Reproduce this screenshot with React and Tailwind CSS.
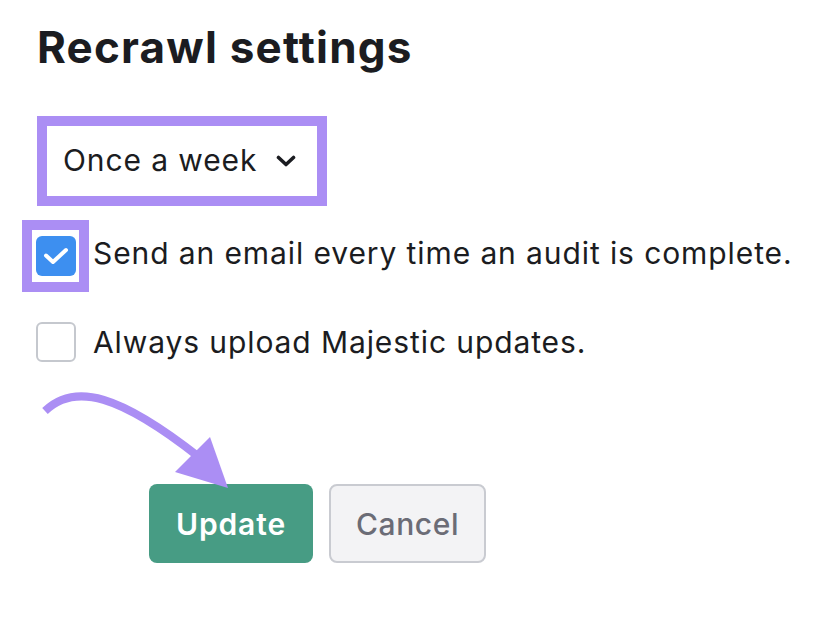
import React from 'react'

function Chevron() {
  return (
    <svg width="20" height="12" viewBox="0 0 20 12" fill="none">
      <path d="M2.5 2.5L10 9.5L17.5 2.5" stroke="#1b1c21" strokeWidth="3.6" strokeLinecap="round" strokeLinejoin="round" />
    </svg>
  )
}

function Arrow() {
  return (
    <svg className="absolute left-0 top-0 pointer-events-none" width="825" height="624" viewBox="0 0 825 624">
      <path d="M45 411 C 75 382, 120 395, 199 457" stroke="#ab8ef4" strokeWidth="8" fill="none" />
      <polygon points="175,472 210,437 228,488" fill="#ab8ef4" />
    </svg>
  )
}

export default function App() {
  return (
    <div className="relative w-[825px] h-[624px] bg-white font-['Inter',sans-serif] text-[#1b1c21] overflow-hidden">
      <h1 className="pl-[37px] pt-[25px] text-[44px] leading-none font-bold tracking-[1.2px]">
        Recrawl settings
      </h1>

      <div className="ml-[37px] mt-[47px] w-[290px] h-[90px] border-[10px] border-[#ab8ef4] flex items-center pl-[16px] pb-[3px] bg-white">
        <span className="text-[30px] leading-none tracking-[0.9px]">Once a week</span>
        <span className="ml-[19px] mt-[3px]">
          <Chevron />
        </span>
      </div>

      <div className="mt-[14px] ml-[22px] flex items-start">
        <div className="w-[67px] h-[72px] border-[10px] border-[#ab8ef4] flex items-center justify-center">
          <div className="w-[40px] h-[40px] rounded-[6px] bg-[#3d8ff0] flex items-center justify-center">
            <svg width="26" height="18" viewBox="0 0 26 18" fill="none">
              <path d="M3 8.5L10 15L23 3" stroke="white" strokeWidth="4" strokeLinecap="round" strokeLinejoin="round" />
            </svg>
          </div>
        </div>
        <span className="ml-[4px] mt-[18px] text-[30px] leading-none tracking-[0.9px]">
          Send an email every time an audit is complete.
        </span>
      </div>

      <div className="mt-[30px] ml-[36px] flex items-start">
        <div className="w-[40px] h-[40px] rounded-[6px] border-2 border-[#c5c8ce] bg-white" />
        <span className="ml-[17px] mt-[5px] text-[30px] leading-none tracking-[0.9px]">
          Always upload Majestic updates.
        </span>
      </div>

      <div className="mt-[122px] ml-[149px] flex gap-[16px]">
        <button className="w-[164px] h-[79px] rounded-[8px] bg-[#479c84] text-white text-[30px] font-semibold leading-none tracking-[0.9px]">
          Update
        </button>
        <button className="w-[157px] h-[79px] rounded-[8px] border-2 border-[#c9cbd1] bg-[#f3f3f5] text-[#6b6c76] text-[30px] font-medium leading-none tracking-[0.6px]">
          Cancel
        </button>
      </div>

      <Arrow />
    </div>
  )
}
